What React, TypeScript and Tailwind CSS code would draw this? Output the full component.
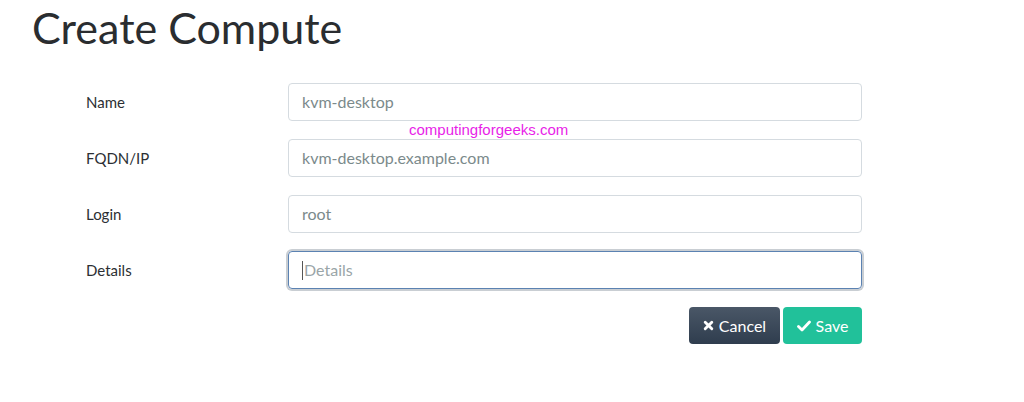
import React from 'react';

const fields = [
  { label: 'Name', value: 'kvm-desktop' },
  { label: 'FQDN/IP', value: 'kvm-desktop.example.com' },
  { label: 'Login', value: 'root' },
];

export default function App() {
  return (
    <div className="relative h-[402px] w-[1024px] overflow-hidden bg-white font-['Lato',sans-serif]">
      <h1 className="ml-[32px] mt-[3px] text-[43px] leading-[50px] text-[#2a2d30]">Create Compute</h1>

      <form className="mt-[30px] flex w-[862px] flex-col gap-[18px] pl-[86px]">
        {fields.map((f) => (
          <div key={f.label} className="flex items-center">
            <label className="w-[202px] text-[15px] text-[#2c2f33]">{f.label}</label>
            <div className="flex h-[38px] flex-1 items-center rounded-[4px] border border-[#d5dbe0] px-[13px] text-[16px] text-[#7b8a8b]">
              {f.value}
            </div>
          </div>
        ))}
        <div className="flex items-center">
          <label className="w-[202px] text-[15px] text-[#2c2f33]">Details</label>
          <div className="flex h-[38px] flex-1 items-center rounded-[4px] border border-[#5b82b2] px-[13px] text-[16px] text-[#9aa5a8] shadow-[0_0_0_2px_#c9ced3]">
            <span className="mr-px inline-block h-[19px] w-px bg-[#555]" />
            Details
          </div>
        </div>

        <div className="flex justify-end gap-[3px]">
          <button
            type="button"
            className="flex h-[37px] w-[91px] items-center justify-center gap-[5px] rounded-[4px] bg-gradient-to-b from-[#4a5767] to-[#2f3d4e] text-[16px] text-white"
          >
            <svg width="11" height="11" viewBox="0 0 10 10">
              <path d="M2 2 L8 8 M8 2 L2 8" stroke="white" strokeWidth="2.6" strokeLinecap="round" />
            </svg>
            Cancel
          </button>
          <button
            type="button"
            className="flex h-[37px] w-[79px] items-center justify-center gap-[5px] rounded-[4px] bg-[#21c19a] text-[16px] text-white"
          >
            <svg width="14" height="12" viewBox="0 0 14 12">
              <path d="M1.5 6.5 L5 10 L12.5 2" fill="none" stroke="white" strokeWidth="2.8" strokeLinecap="round" strokeLinejoin="round" />
            </svg>
            Save
          </button>
        </div>
      </form>

      <div className="absolute left-[409px] top-[119px] font-['Liberation_Sans',sans-serif] text-[15px] text-[#e81ee8]">
        computingforgeeks.com
      </div>
    </div>
  );
}
